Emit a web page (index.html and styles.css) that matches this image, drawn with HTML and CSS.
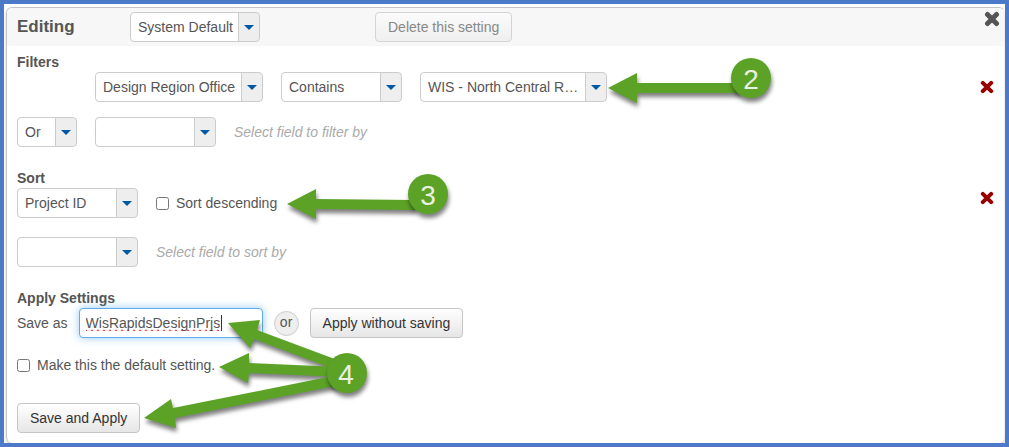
FILE: index.html
```html
<!DOCTYPE html>
<html lang="en">
<head>
    <meta charset="UTF-8">
    <meta name="viewport" content="width=device-width, initial-scale=1.0">
    <title>Editing Settings</title>
    <link rel="stylesheet" href="styles.css">
</head>
<body>
    <div class="frame">
        <form class="panel">
            <header class="panel-header">
                <h1>Editing</h1>
                <span class="combo setting"><select aria-label="Setting"><option>System Default</option></select></span>
                <button class="btn delete" type="button" disabled>Delete this setting</button>
                <button class="icon-btn close" type="button" aria-label="Close">
                    <svg width="16" height="16" viewBox="0 0 16 16"><path d="M3.5 3.5L12.5 12.5M12.5 3.5L3.5 12.5"/></svg>
                </button>
            </header>

            <section>
                <h2>Filters</h2>
                <div class="row indent">
                    <span class="combo field"><select aria-label="Filter field"><option>Design Region Office</option></select></span>
                    <span class="combo medium"><select aria-label="Operator"><option>Contains</option></select></span>
                    <span class="combo value"><select aria-label="Filter value"><option>WIS - North Central R…</option></select></span>
                    <button class="icon-btn remove" type="button" aria-label="Remove filter">
                        <svg width="14" height="14" viewBox="0 0 14 14"><path d="M2.8 2.8L11.2 11.2M11.2 2.8L2.8 11.2"/></svg>
                    </button>
                </div>
                <div class="row">
                    <span class="combo small"><select aria-label="Join"><option>Or</option></select></span>
                    <span class="combo medium"><select id="newFilter"><option></option></select></span>
                    <label class="hint" for="newFilter">Select field to filter by</label>
                </div>
            </section>

            <section>
                <h2>Sort</h2>
                <div class="row">
                    <span class="combo medium"><select aria-label="Sort field"><option>Project ID</option></select></span>
                    <label class="check"><input type="checkbox"> Sort descending</label>
                    <button class="icon-btn remove top" type="button" aria-label="Remove sort">
                        <svg width="14" height="14" viewBox="0 0 14 14"><path d="M2.8 2.8L11.2 11.2M11.2 2.8L2.8 11.2"/></svg>
                    </button>
                </div>
                <div class="row">
                    <span class="combo medium"><select id="newSort"><option></option></select></span>
                    <label class="hint" for="newSort">Select field to sort by</label>
                </div>
            </section>

            <section>
                <h2>Apply Settings</h2>
                <div class="row save-row">
                    <label for="saveAs">Save as</label>
                    <span class="name-box"><input type="text" id="saveAs" value="WisRapidsDesignPrjs"></span>
                    <span class="or">or</span>
                    <button class="btn" type="button">Apply without saving</button>
                </div>
                <div class="default-row">
                    <label class="check"><input type="checkbox"> Make this the default setting.</label>
                </div>
                <button class="btn" type="button">Save and Apply</button>
            </section>
        </form>

        <!-- numbered steps -->
        <svg class="steps" width="800" height="447" viewBox="0 0 800 447">
            <g class="arrows">
                <path d="M608 88L637 73V83H740V93H637V103Z"/>
                <path d="M287 204L316 189V199L415 200V210L316 209V219Z"/>
                <path d="M228 323L260 320L257 330L340 361L336 370L254 339L250 348Z"/>
                <path d="M219 367L249 353V363L340 367V377L249 373L248 383Z"/>
                <path d="M144 418L171 399L173 408L338 375L340 385L175 418L176 428Z"/>
            </g>
            <g class="badges">
                <circle cx="751" cy="78" r="20"/>
                <circle cx="428" cy="194" r="20"/>
                <circle cx="347" cy="373" r="20"/>
            </g>
            <g class="numbers">
                <text x="751" y="89">2</text>
                <text x="428" y="205">3</text>
                <text x="346" y="384">4</text>
            </g>
        </svg>
    </div>
</body>
</html>
```
FILE: styles.css
```css
* {
    box-sizing: border-box;
}

body {
    margin: 0;
    font-family: "Liberation Sans", Arial, sans-serif;
    font-size: 14px;
    line-height: 20px;
    color: #555555;
}

.frame {
    position: relative;
    min-height: 100vh;
    padding: 3px 0 0 2px;
    border: 4px solid #4d79c9;
    background-color: #ffffff;
    display: flex;
    overflow: hidden;
}

.panel {
    flex: 1;
    border: 1px solid #c4c4c4;
    border-right-color: #eeeeee;
    border-bottom: none;
    border-radius: 6px;
    box-shadow: 0 2px 3px rgba(0, 0, 0, 0.2);
    overflow: hidden;
}

.panel-header {
    display: flex;
    align-items: center;
    height: 38px;
    padding: 0 4px 0 10px;
    background-color: #f7f7f7;
}

h1 {
    width: 113px;
    margin: 0;
    font-size: 17px;
}

h2 {
    margin: 0;
    font-size: 14px;
    line-height: 20px;
}

section {
    padding: 6px 10px 0;
}

section + section {
    padding-top: 21px;
}

.row {
    display: flex;
    align-items: center;
    gap: 18px;
    height: 30px;
}

.row + .row {
    margin-top: 15px;
}

section + section .row + .row {
    margin-top: 19px;
}

.indent {
    padding-left: 78px;
}

/* drop-downs */
.combo {
    position: relative;
    height: 30px;
}

.combo select {
    appearance: none;
    width: 100%;
    height: 30px;
    padding: 0 24px 0 7px;
    border: 1px solid #cccccc;
    border-radius: 4px;
    background: linear-gradient(to left, #eeeeee 20px, #cccccc 20px, #cccccc 21px, #ffffff 21px);
    font: inherit;
    color: #555555;
}

.combo::after {
    content: "";
    position: absolute;
    top: 13px;
    right: 6px;
    border: 5px solid transparent;
    border-top-color: #0059a5;
    border-bottom: none;
    pointer-events: none;
}

.setting {
    width: 130px;
}

.field {
    width: 168px;
}

.medium {
    width: 121px;
}

.value {
    width: 187px;
}

.small {
    width: 60px;
}

.hint {
    font-style: italic;
    color: #aaaaaa;
}

.check {
    display: flex;
    align-items: center;
    gap: 7px;
}

.check input {
    width: 13px;
    height: 13px;
    margin: 0;
}

/* buttons */
.btn {
    height: 30px;
    padding: 0 12px;
    border: 1px solid #c5c5c5;
    border-radius: 4px;
    background: linear-gradient(#ffffff, #e6e6e6);
    font: inherit;
    color: #333333;
}

.btn:disabled {
    border-color: #d4d4d4;
    background: linear-gradient(#fbfbfb, #efefef);
    color: #888888;
}

.delete {
    margin-left: 115px;
}

.icon-btn {
    display: flex;
    margin-left: auto;
    padding: 0;
    border: none;
    background: none;
}

.icon-btn path {
    stroke-width: 4;
    stroke-linecap: round;
    fill: none;
}

.close {
    align-self: flex-start;
    margin-top: 3px;
}

.icon-btn.close path {
    stroke: #555555;
    stroke-width: 5;
}

.remove path {
    stroke: #990000;
}

.top {
    align-self: flex-start;
    margin-top: 3px;
}

.save-row {
    gap: 11px;
}

.name-box {
    position: relative;
    width: 184px;
}

.name-box input {
    display: block;
    width: 100%;
    height: 30px;
    padding: 0 6px;
    border: 1px solid #5eaced;
    border-radius: 4px;
    box-shadow: 0 0 8px rgba(82, 168, 236, 0.6);
    font: inherit;
    color: #555555;
    text-decoration: spelling-error;
    text-decoration-skip-ink: none;
}

/* text cursor */
.name-box::after {
    content: "";
    position: absolute;
    top: 7px;
    left: 142px;
    width: 1px;
    height: 16px;
    background-color: #333333;
}

.or {
    width: 25px;
    height: 25px;
    border: 1px solid #cccccc;
    border-radius: 50%;
    background-color: #eeeeee;
    line-height: 21px;
    text-align: center;
}

.default-row {
    margin: 17px 0 28px;
}

/* steps drawn over the form, starting at the frame's outer corner */
.steps {
    position: absolute;
    top: -4px;
    left: -4px;
    pointer-events: none;
}

.arrows,
.badges {
    fill: #5ba226;
    filter: drop-shadow(1px 4px 2px rgba(0, 0, 0, 0.5));
}

.numbers {
    fill: #e8f0e2;
    font-size: 28px;
    text-anchor: middle;
}
```
